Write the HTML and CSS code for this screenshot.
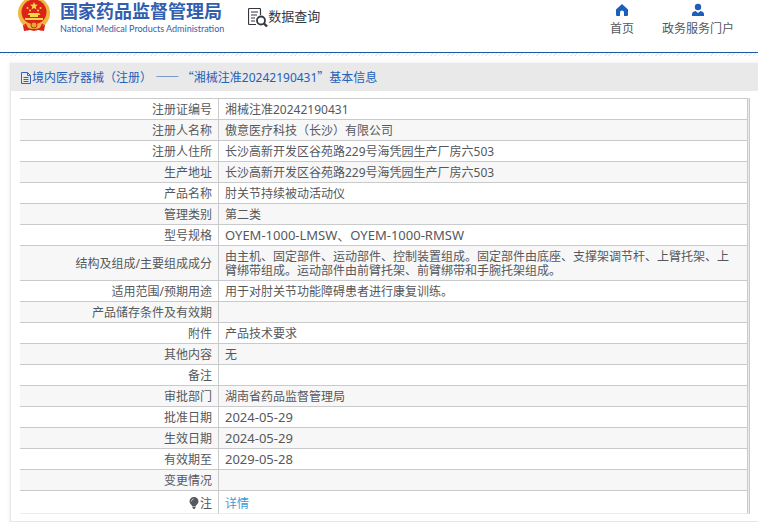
FILE: index.html
```html
<!DOCTYPE html>
<html lang="zh-CN">
<head>
<meta charset="utf-8">
<meta name="viewport" content="width=device-width, initial-scale=1">
<title>国家药品监督管理局 数据查询</title>
<link rel="stylesheet" href="styles.css">
</head>
<body>
<header class="site-header">
  <a class="brand" href="#">
    <svg class="emblem" viewBox="0 0 32 36" aria-hidden="true">
      <path d="M4 23 6 34 12 33 16 34 20 33 26 34 28 23Z" fill="#d8261c"/>
      <circle cx="16" cy="16" r="16" fill="#efb840"/>
      <circle cx="16" cy="15" r="12.500" fill="#dc2318"/>
      <path d="M16 5l1.100 2.600 2.800.2-2.100 1.800.6 2.800L16 11l-2.400 1.400.6-2.800-2.100-1.800 2.800-.2Z" fill="#f8d34c"/>
      <g fill="#f8d34c"><circle cx="9.500" cy="11" r="1"/><circle cx="12" cy="13.500" r="1"/><circle cx="20" cy="13.500" r="1"/><circle cx="22.500" cy="11" r="1"/><path d="M11 16h10l1.500 2h-13ZM12 18h8v2h-8ZM7 21h18v2H7Z"/></g>
      <path d="M4 23q5 4 12 4t12-4l-2 5q-4 2-6 3l-4-2-4 2q-3-1-6-3Z" fill="#efb840"/>
      <circle cx="16" cy="28" r="3" fill="#e9a52d" stroke="#d8261c"/>
      <path d="M7 27l3 6M25 27l-3 6" stroke="#d8261c" stroke-width="2"/>
    </svg>
    <span class="brand-text">
      <span class="brand-cn">国家药品监督管理局</span>
      <span class="brand-en">National Medical Products Administration</span>
    </span>
  </a>
  <a class="query" href="#">
    <svg class="query-icon" viewBox="0 0 20 20" fill="none" stroke="#34373f" aria-hidden="true">
      <path d="M8 16.500H1.500a1 1 0 0 1-1-1v-14a1 1 0 0 1 1-1h10a1 1 0 0 1 1 1V7" stroke-width="1.200"/>
      <path d="M3 4h7M3 7h6M3 10h4M3 13h4" stroke-width="1.200"/>
      <circle cx="13" cy="12.500" r="4" stroke-width="1.800"/>
      <path d="m16 15.500 3 3" stroke-width="2.400"/>
    </svg>
    <span>数据查询</span>
  </a>
  <nav class="links">
    <a href="#">
      <svg class="nav-icon" viewBox="0 0 14 14" aria-hidden="true"><path d="M7 1 1 6.500V12a1 1 0 0 0 1 1h3V9.500a2 2 0 0 1 4 0V13h3a1 1 0 0 0 1-1V6.500Z" fill="#1b5fbd"/></svg>
      <span>首页</span>
    </a>
    <a href="#">
      <svg class="nav-icon" viewBox="0 0 14 14" aria-hidden="true"><circle cx="7" cy="4" r="3.200" fill="#1b5fbd"/><path d="M1 13v-2q0-2 3.500-3L7 10l2.500-2Q13 9 13 11v2Z" fill="#1b5fbd"/></svg>
      <span>政务服务门户</span>
    </a>
  </nav>
</header>
<div class="hatch"></div>
<main class="card">
  <h1 class="card-title">
    <svg class="doc-icon" viewBox="0 0 10 12" fill="none" stroke="#2c66bd" aria-hidden="true"><path d="M.5.500h6l3 3v8h-9ZM6.500.500v3h3M2.500 5.500h5M2.500 7.500h5M2.500 9.500h5"/></svg>
    <span class="title-text">境内医疗器械（注册） <span class="cjk">—— “</span>湘械注准20242190431<span class="cjk">”</span>基本信息</span>
  </h1>
  <table class="info">
    <tbody>
      <tr><th scope="row">注册证编号</th><td>湘械注准20242190431</td></tr>
      <tr><th scope="row">注册人名称</th><td>傲意医疗科技（长沙）有限公司</td></tr>
      <tr><th scope="row">注册人住所</th><td>长沙高新开发区谷苑路229号海凭园生产厂房六503</td></tr>
      <tr><th scope="row">生产地址</th><td>长沙高新开发区谷苑路229号海凭园生产厂房六503</td></tr>
      <tr><th scope="row">产品名称</th><td>肘关节持续被动活动仪</td></tr>
      <tr><th scope="row">管理类别</th><td>第二类</td></tr>
      <tr><th scope="row">型号规格</th><td class="latin">OYEM-1000-LMSW、OYEM-1000-RMSW</td></tr>
      <tr><th scope="row">结构及组成/主要组成成分</th><td>由主机、固定部件、运动部件、控制装置组成。固定部件由底座、支撑架调节杆、上臂托架、上臂绑带组成。运动部件由前臂托架、前臂绑带和手腕托架组成。</td></tr>
      <tr><th scope="row">适用范围/预期用途</th><td>用于对肘关节功能障碍患者进行康复训练。</td></tr>
      <tr><th scope="row">产品储存条件及有效期</th><td></td></tr>
      <tr><th scope="row">附件</th><td>产品技术要求</td></tr>
      <tr><th scope="row">其他内容</th><td>无</td></tr>
      <tr><th scope="row">备注</th><td></td></tr>
      <tr><th scope="row">审批部门</th><td>湖南省药品监督管理局</td></tr>
      <tr><th scope="row">批准日期</th><td class="latin">2024-05-29</td></tr>
      <tr><th scope="row">生效日期</th><td class="latin">2024-05-29</td></tr>
      <tr><th scope="row">有效期至</th><td class="latin">2029-05-28</td></tr>
      <tr><th scope="row">变更情况</th><td></td></tr>
      <tr class="note"><th scope="row"><svg class="bulb" viewBox="0 0 10 12" aria-hidden="true"><path d="M5 0a4.500 4.500 0 0 0-4.500 4.600C.5 7 3 8 3.300 9.500h3.400C7 8 9.500 7 9.500 4.600A4.500 4.500 0 0 0 5 0ZM3.500 10h3v1l-1 1h-1l-1-1Z" fill="#55585f"/><path d="M2.200 4.500Q2.500 2.300 4.700 2" fill="none" stroke="#d5d6d8" stroke-width=".8"/></svg>注</th><td><a href="#">详情</a></td></tr>
    </tbody>
  </table>
</main>
</body>
</html>
```
FILE: styles.css
```css
* {
  box-sizing: border-box;
}

body {
  margin: 0;
  background: #fff;
  color: #55585c;
  font: 12px/14px "Noto Sans", "Noto Sans CJK SC", sans-serif;
}

a {
  color: inherit;
  text-decoration: none;
}

svg {
  flex: none;
}

.site-header {
  display: flex;
  align-items: flex-start;
  height: 53px;
  padding: 0 24px 0 18px;
  border-bottom: 1px solid #1d59a3;
}

.brand {
  display: flex;
  gap: 10px;
  color: #315eae;
}

.emblem {
  width: 32px;
  height: 36px;
  margin-top: -3px;
}

.brand-text {
  display: flex;
  flex-direction: column;
  white-space: nowrap;
}

.brand-cn {
  font-size: 18px;
  font-weight: 700;
  line-height: 22px;
}

.brand-en {
  font: 400 9px/14px Lato, sans-serif;
}

.query {
  display: flex;
  margin-left: 24px;
  padding-top: 8px;
  color: #34373f;
  font-size: 13px;
  line-height: 16px;
  white-space: nowrap;
}

.query-icon {
  width: 20px;
  height: 20px;
}

.links {
  display: flex;
  gap: 28px;
  margin-left: auto;
  padding-top: 3px;
  white-space: nowrap;
}

.links a {
  display: flex;
  flex-direction: column;
  align-items: center;
  gap: 5px;
}

.nav-icon {
  width: 14px;
  height: 14px;
}

.hatch {
  height: 3px;
  background: repeating-linear-gradient(135deg, #e3ebf5 0 1px, #fff 1px 3px);
}

.card {
  margin: 6px 0 0 10px;
  padding-bottom: 7px;
  border: 1px solid #e6e6e6;
  border-top-color: #f8f6f6;
  border-right: 0;
  box-shadow: 0 1px 4px #e8e8e8;
}

.card-title {
  display: flex;
  align-items: center;
  height: 28px;
  margin: 0 0 7px;
  padding: 1px 0 0 10px;
  background: #e9e9e9;
  color: #2460b8;
  font-size: 12px;
  font-weight: 400;
}

.title-text {
  white-space: pre;
}

.cjk {
  font-family: "Noto Sans CJK SC", sans-serif;
}

.doc-icon {
  width: 10px;
  height: 12px;
  margin-right: 1px;
}

.info {
  width: calc(100% - 17px);
  margin-left: 9px;
  border-spacing: 0;
  border-right: 1px solid #c9cacb;
  background: #ececec;
  padding-right: 1px;
  table-layout: fixed;
}

.info th,
.info td {
  height: 21px;
  padding: 4px 6px 2px;
  border-top: 1px solid #c9cacb;
  border-right: 1px solid #c9cacb;
  background: #fff;
  font-weight: 400;
}

.info th {
  width: 199px;
  text-align: right;
}

.info td {
  padding-right: 10px;
  text-align: left;
}

.info .latin {
  padding-top: 3px;
  padding-bottom: 3px;
  font-size: 13px;
}

.info tr:nth-child(even) > * {
  background: #f7f7f7;
}

.info .note > * {
  height: 24px;
  padding: 6px 6px 2px;
  border-bottom: 1px solid #ececec;
  background: #fff;
}

.note a {
  color: #409ad9;
}

.bulb {
  width: 10px;
  height: 12px;
  margin-right: 1px;
  vertical-align: -1px;
}
```
